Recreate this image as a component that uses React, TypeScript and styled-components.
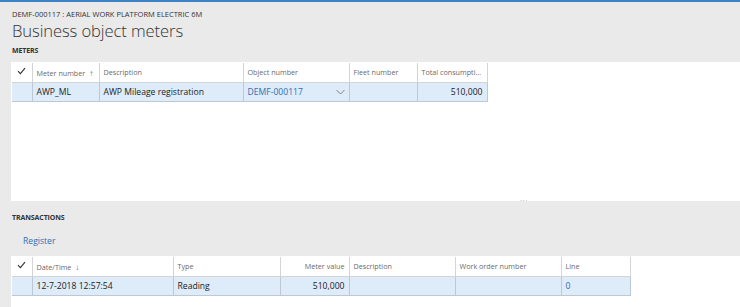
import React from "react";
import styled, { createGlobalStyle } from "styled-components";

const GlobalStyle = createGlobalStyle`
  html, body {
    margin: 0;
    padding: 0;
    background: #eaeaea;
    font-family: "Open Sans", "Noto Sans", "Liberation Sans", sans-serif;
    color: #222;
  }
`;

const Page = styled.div`
  border-top: 2px solid #3c82c4;
  height: 305px;
  overflow: hidden;
  display: flex;
  flex-direction: column;
`;

const Head = styled.div`
  padding: 7px 0 0 12px;
`;

const Breadcrumb = styled.div`
  font-size: 7.5px;
  color: #333;
  line-height: 10px;
  height: 10px;
  white-space: nowrap;
`;

const Title = styled.h1`
  margin: 2px 0 0;
  font-size: 16.6px;
  font-weight: 300;
  color: #333;
  line-height: 19px;
  letter-spacing: -0.1px;
`;

const SectionLabel = styled.div<{ $top: number }>`
  font-size: 7px;
  font-weight: 700;
  color: #333;
  padding: ${(p) => p.$top}px 0 0 12px;
  line-height: 9px;
  letter-spacing: -0.1px;
`;

const Spacer = styled.div<{ $h: number }>`
  height: ${(p) => p.$h}px;
  flex: none;
`;

const Panel = styled.div<{ $height?: number }>`
  margin-left: 11px;
  padding: 1px 0 0 1px;
  background: #fff;
  height: ${(p) => (p.$height ? `${p.$height}px` : "auto")};
  box-sizing: border-box;
  flex: ${(p) => (p.$height ? "none" : "1")};
  position: relative;
`;

const Grip = styled.div`
  position: absolute;
  left: 509px;
  bottom: -1px;
  color: #aaa;
  font-size: 8px;
  line-height: 4px;
  letter-spacing: 0.5px;
`;

const Table = styled.table<{ $w: number }>`
  border-collapse: collapse;
  table-layout: fixed;
  width: ${(p) => p.$w}px;
`;

const Th = styled.th<{ $w: number; $right?: boolean }>`
  width: ${(p) => p.$w}px;
  height: 19px;
  padding: 0 4px 0 4px;
  box-sizing: border-box;
  font-size: 7.2px;
  font-weight: 400;
  color: #6a6a6a;
  text-align: ${(p) => (p.$right ? "right" : "left")};
  border: 1px solid #d4d4d4;
  border-top: none;
  white-space: nowrap;
  overflow: hidden;
  text-overflow: ellipsis;
  &:first-child {
    border-left: none;
    text-align: center;
    padding: 0;
  }
`;

const Td = styled.td<{ $right?: boolean; $link?: boolean }>`
  height: 19px;
  padding: 0 4px;
  box-sizing: border-box;
  font-size: 8.6px;
  color: ${(p) => (p.$link ? "#2f6fb1" : "#222")};
  text-align: ${(p) => (p.$right ? "right" : "left")};
  background: #deebf8;
  border: 1px solid #bcc8d4;
  white-space: nowrap;
  &:first-child {
    border-left: none;
  }
`;

const CellFlex = styled.div`
  display: flex;
  align-items: center;
  justify-content: space-between;
`;

const Arrow = styled.span`
  color: #666;
  font-size: 8px;
  margin-left: 2px;
`;

const Register = styled.div`
  font-size: 8.6px;
  color: #2f6fb1;
  padding: 13px 0 0 23px;
  line-height: 12px;
`;

const Check = () => (
  <svg width="9" height="8" viewBox="0 0 9 8">
    <path d="M1 4.2 L3.4 6.6 L8 1.2" fill="none" stroke="#333" strokeWidth="1.1" />
  </svg>
);

const Chevron = () => (
  <svg width="9" height="6" viewBox="0 0 9 6">
    <path d="M0.5 1 L4.5 5 L8.5 1" fill="none" stroke="#777" strokeWidth="0.9" />
  </svg>
);

const meterCols = [20, 67, 144, 106, 68, 70];
const transCols = [20, 141, 107, 69, 106, 106, 69];
const sum = (a: number[]) => a.reduce((s, v) => s + v, 0);

export default function App() {
  return (
    <>
      <GlobalStyle />
      <Page>
        <Head>
          <Breadcrumb>DEMF-000117 : AERIAL WORK PLATFORM ELECTRIC 6M</Breadcrumb>
          <Title>Business object meters</Title>
        </Head>
        <SectionLabel $top={6}>METERS</SectionLabel>
        <Spacer $h={7} />
        <Panel $height={139}>
          <Table $w={sum(meterCols)}>
            <thead>
              <tr>
                <Th $w={meterCols[0]}>
                  <Check />
                </Th>
                <Th $w={meterCols[1]}>
                  Meter number <Arrow>↑</Arrow>
                </Th>
                <Th $w={meterCols[2]}>Description</Th>
                <Th $w={meterCols[3]}>Object number</Th>
                <Th $w={meterCols[4]}>Fleet number</Th>
                <Th $w={meterCols[5]}>Total consumption</Th>
              </tr>
            </thead>
            <tbody>
              <tr>
                <Td />
                <Td>AWP_ML</Td>
                <Td>AWP Mileage registration</Td>
                <Td $link>
                  <CellFlex>
                    DEMF-000117
                    <Chevron />
                  </CellFlex>
                </Td>
                <Td />
                <Td $right>510,000</Td>
              </tr>
            </tbody>
          </Table>
          <Grip>···</Grip>
        </Panel>
        <SectionLabel $top={12}>TRANSACTIONS</SectionLabel>
        <Register>Register</Register>
        <Spacer $h={9} />
        <Panel>
          <Table $w={sum(transCols)}>
            <thead>
              <tr>
                <Th $w={transCols[0]}>
                  <Check />
                </Th>
                <Th $w={transCols[1]}>
                  Date/Time <Arrow>↓</Arrow>
                </Th>
                <Th $w={transCols[2]}>Type</Th>
                <Th $w={transCols[3]} $right>
                  Meter value
                </Th>
                <Th $w={transCols[4]}>Description</Th>
                <Th $w={transCols[5]}>Work order number</Th>
                <Th $w={transCols[6]}>Line</Th>
              </tr>
            </thead>
            <tbody>
              <tr>
                <Td />
                <Td>12-7-2018 12:57:54</Td>
                <Td>Reading</Td>
                <Td $right>510,000</Td>
                <Td />
                <Td />
                <Td $link>0</Td>
              </tr>
            </tbody>
          </Table>
        </Panel>
      </Page>
    </>
  );
}
